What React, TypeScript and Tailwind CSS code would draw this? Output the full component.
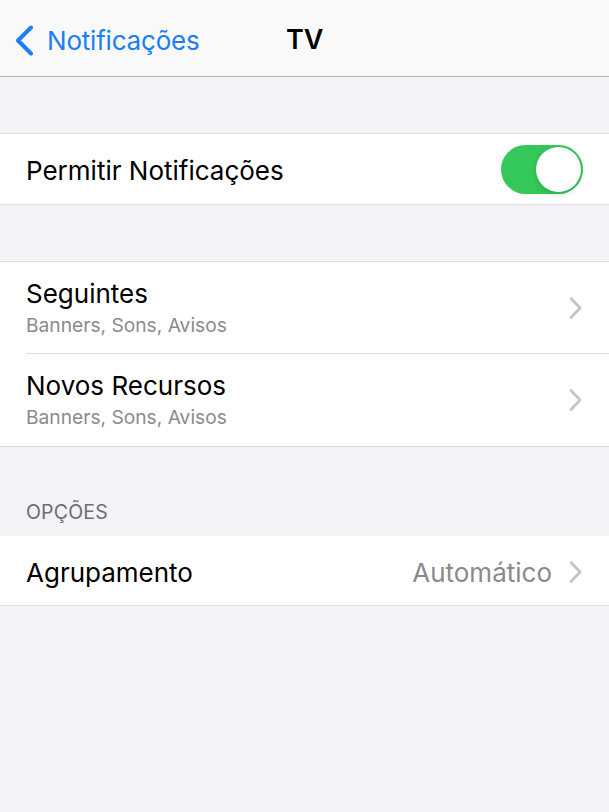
import React from "react";

function Chevron() {
  return (
    <svg width="13" height="24" viewBox="0 0 13 24" fill="none" className="shrink-0">
      <path d="M2 2.5 L11 12 L2 21.5" stroke="#c4c4c7" strokeWidth="2.8" strokeLinecap="round" strokeLinejoin="round" />
    </svg>
  );
}

function Toggle() {
  return (
    <div className="w-[82px] h-[49px] rounded-full bg-[#34c759] flex items-center justify-end p-[2px]">
      <div className="w-[45px] h-[45px] rounded-full bg-white shadow-[0_2px_6px_rgba(0,0,0,0.15)]" />
    </div>
  );
}

function DetailRow({ title, sub, last }: { title: string; sub: string; last?: boolean }) {
  return (
    <div className="flex items-center h-[92px] pl-[26px]">
      <div className={`flex-1 h-full flex items-center pr-[27px] ${last ? "" : "border-b border-[#dcdce0]"}`}>
        <div className="flex-1 flex flex-col">
          <span className="text-[26px] leading-[30px] text-black">{title}</span>
          <span className="text-[19.2px] leading-[24px] text-[#8a8a8e] mt-[4px]">{sub}</span>
        </div>
        <Chevron />
      </div>
    </div>
  );
}

export default function App() {
  return (
    <div
      className="w-[609px] h-[812px] bg-[#f2f2f7] flex flex-col"
      style={{ fontFamily: "Inter, 'Liberation Sans', sans-serif" }}
    >
      {/* nav bar */}
      <div className="h-[77px] bg-[#f9f9f9] border-b border-[#b4b4b8] flex items-center relative pt-[4px]">
        <div className="flex items-center pl-[15px] gap-[13px]">
          <svg width="19" height="31" viewBox="0 0 19 31" fill="none">
            <path d="M16 2.5 L3 15.5 L16 28.5" stroke="#1a7ff5" strokeWidth="4" strokeLinecap="round" strokeLinejoin="round" />
          </svg>
          <span className="text-[26px] text-[#1a7ff5] tracking-[-0.2px]">Notificações</span>
        </div>
        <span className="absolute left-[286px] text-[27px] font-semibold text-black">TV</span>
      </div>

      <div className="h-[56px]" />

      {/* allow notifications */}
      <div className="h-[72px] bg-white border-y border-[#e2e2e6] flex items-center pl-[26px] pr-[26px]">
        <span className="flex-1 text-[26px] text-black pt-[3px]">Permitir Notificações</span>
        <Toggle />
      </div>

      <div className="h-[56px]" />

      {/* categories */}
      <div className="bg-white border-y border-[#dcdce0]">
        <DetailRow title="Seguintes" sub="Banners, Sons, Avisos" />
        <DetailRow title="Novos Recursos" sub="Banners, Sons, Avisos" last />
      </div>

      <div className="h-[89px] flex items-end pl-[26px] pb-[9px]">
        <span className="text-[19.5px] text-[#6d6d72] tracking-[0.2px]">OPÇÕES</span>
      </div>

      {/* grouping */}
      <div className="h-[70px] bg-white border-b border-[#e2e2e6] flex items-center pl-[26px] pr-[27px] pt-[3px]">
        <span className="flex-1 text-[26px] text-black">Agrupamento</span>
        <span className="text-[26px] text-[#8a8a8e] mr-[17px]">Automático</span>
        <Chevron />
      </div>
    </div>
  );
}
